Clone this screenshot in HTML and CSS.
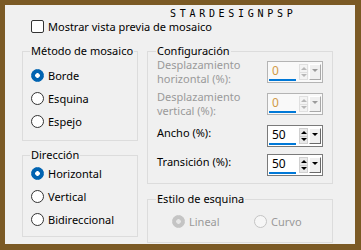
FILE: index.html
```html
<!DOCTYPE html>
<html>
  <head>
    <link rel="stylesheet" href="styles.css">
  </head>
  <body>
    <div class="dialog">
      <div class="mark">STARDESIGNPSP</div>

      <label class="check-row">
        <span class="checkbox"></span>
        Mostrar vista previa de mosaico
      </label>

      <div class="columns">
        <div class="col col-left">
          <fieldset class="group method">
            <legend>Método de mosaico</legend>
            <div class="radio-row"><span class="radio on"></span>Borde</div>
            <div class="radio-row"><span class="radio"></span>Esquina</div>
            <div class="radio-row"><span class="radio"></span>Espejo</div>
          </fieldset>

          <fieldset class="group direction">
            <legend>Dirección</legend>
            <div class="radio-row"><span class="radio on"></span>Horizontal</div>
            <div class="radio-row"><span class="radio"></span>Vertical</div>
            <div class="radio-row"><span class="radio"></span>Bidireccional</div>
          </fieldset>
        </div>

        <div class="col col-right">
          <fieldset class="group config">
            <legend>Configuración</legend>
            <div class="field-row">
              <div class="field-label two-line disabled">Desplazamiento<br>horizontal (%):</div>
              <div class="spin disabled">
                <div class="spin-value">0</div>
                <div class="spin-arrows"><span class="up"></span><span class="down"></span></div>
                <div class="spin-drop"></div>
              </div>
            </div>
            <div class="field-row">
              <div class="field-label two-line disabled">Desplazamiento<br>vertical (%):</div>
              <div class="spin disabled">
                <div class="spin-value">0</div>
                <div class="spin-arrows"><span class="up"></span><span class="down"></span></div>
                <div class="spin-drop"></div>
              </div>
            </div>
            <div class="field-row">
              <div class="field-label">Ancho (%):</div>
              <div class="spin">
                <div class="spin-value">50</div>
                <div class="spin-arrows"><span class="up"></span><span class="down"></span></div>
                <div class="spin-drop"></div>
              </div>
            </div>
            <div class="field-row">
              <div class="field-label">Transición (%):</div>
              <div class="spin">
                <div class="spin-value">50</div>
                <div class="spin-arrows"><span class="up"></span><span class="down"></span></div>
                <div class="spin-drop"></div>
              </div>
            </div>
          </fieldset>

          <fieldset class="group corner">
            <legend>Estilo de esquina</legend>
            <div class="corner-options">
              <div class="radio-row disabled"><span class="radio on"></span>Lineal</div>
              <div class="radio-row disabled"><span class="radio"></span>Curvo</div>
            </div>
          </fieldset>
        </div>
      </div>
    </div>
  </body>
</html>
```

FILE: styles.css
```css
body {
  margin: 0;
  font-family: "Noto Sans", "Open Sans", sans-serif;
  font-size: 11px;
  color: #000;
}
.dialog {
  position: relative;
  width: 361px;
  height: 250px;
  box-sizing: border-box;
  border-style: solid;
  border-color: #7b5a25;
  border-width: 5px 6px 6px 5px;
  background: #f0f0f0;
  padding: 15px 0 0 17px;
}
.mark {
  position: absolute;
  top: 4px;
  left: 165px;
  font-family: "DejaVu Sans Mono", monospace;
  font-size: 10px;
  line-height: 10px;
  letter-spacing: 3.7px;
}
.check-row {
  display: flex;
  align-items: center;
  gap: 4px;
  height: 13px;
  line-height: 13px;
  margin: 0 0 11px 9px;
}
.checkbox {
  width: 13px;
  height: 13px;
  box-sizing: border-box;
  border: 1px solid #333;
  border-radius: 2px;
  background: #fff;
}
.columns {
  display: flex;
  gap: 9px;
}
.col {
  display: flex;
  flex-direction: column;
}
.col-left {
  width: 116px;
}
.col-right {
  width: 186px;
}
.group {
  margin: 0;
  min-width: 0;
  border: 1px solid #dcdcdc;
  padding: 0 8px;
}
.group legend {
  padding: 0 1px;
  margin-left: -1px;
  line-height: 14px;
  white-space: nowrap;
}
.method {
  padding-top: 6px;
  padding-bottom: 7px;
}
.direction {
  margin-top: 7px;
  padding-top: 0;
  padding-bottom: 5px;
}
.radio-row {
  display: flex;
  align-items: center;
  gap: 4px;
  height: 23px;
}
.radio {
  width: 13px;
  height: 13px;
  box-sizing: border-box;
  border: 1px solid #333;
  border-radius: 50%;
  background: #fff;
}
.radio.on {
  border-color: #0063b1;
  background: radial-gradient(circle, #fff 0 2px, #0063b1 2.6px);
}
.disabled {
  color: #9a9a9a;
}
.radio-row.disabled .radio {
  border-color: #c4c4c4;
  background: #f6f6f6;
}
.radio-row.disabled .radio.on {
  background: radial-gradient(circle, #e6e6e6 0 2px, #c4c4c4 2.6px);
}
.config {
  padding: 3px 9px 7px;
}
.field-row {
  display: flex;
  align-items: flex-start;
  justify-content: space-between;
  margin-bottom: 7px;
}
.field-row:last-child {
  margin-bottom: 0;
}
.field-label {
  line-height: 14px;
  margin-top: 1px;
}
.field-label.two-line {
  margin-top: -3px;
}
.spin {
  display: flex;
  align-items: flex-start;
  width: 56px;
  height: 22px;
  box-sizing: border-box;
  border: 1px solid #7a7a7a;
  background: #fff;
  color: #000;
}
.spin.disabled {
  border-color: #b4b4b4;
  background: #f9f9f9;
  color: #d19a48;
}
.spin-value {
  width: 27px;
  height: 19px;
  box-sizing: border-box;
  margin-left: 1px;
  padding-left: 3px;
  font-size: 12px;
  line-height: 17px;
  border-bottom: 2px solid #0078d7;
}
.spin-arrows {
  display: flex;
  flex-direction: column;
  width: 9px;
  height: 16px;
  margin: 2px 0 0 3px;
}
.spin-arrows span {
  flex: 1;
  display: flex;
  align-items: center;
  justify-content: center;
  background: #e9e9e9;
  border: 1px solid #d0d0d0;
}
.spin-arrows span + span {
  border-top: none;
}
.spin-arrows .up::after,
.spin-arrows .down::after {
  content: "";
  border-left: 3px solid transparent;
  border-right: 3px solid transparent;
}
.spin-arrows .up::after {
  border-bottom: 3px solid #000;
}
.spin-arrows .down::after {
  border-top: 3px solid #000;
}
.spin.disabled .spin-arrows span {
  background: #f4f4f4;
  border-color: #e0e0e0;
}
.spin.disabled .spin-arrows .up::after {
  border-bottom-color: #b8b8b8;
}
.spin.disabled .spin-arrows .down::after {
  border-top-color: #b8b8b8;
}
.spin-drop {
  display: flex;
  justify-content: center;
  width: 12px;
  height: 16px;
  box-sizing: border-box;
  margin: 2px 0 0 1px;
  border: 1px solid;
  border-color: #fff #696969 #696969 #fff;
  background: #f0f0f0;
  padding-top: 4px;
}
.spin-drop::after {
  content: "";
  height: 0;
  border-left: 3px solid transparent;
  border-right: 3px solid transparent;
  border-top: 3px solid #000;
}
.spin.disabled .spin-drop {
  border-color: #fff #a8a8a8 #a8a8a8 #fff;
}
.spin.disabled .spin-drop::after {
  border-top-color: #9a9a9a;
}
.corner {
  margin-top: 8px;
  padding: 7px 9px 13px;
}
.corner-options {
  display: grid;
  grid-template-columns: 82px auto;
  margin-left: 15px;
}
.corner-options .radio-row {
  height: 16px;
}
```
